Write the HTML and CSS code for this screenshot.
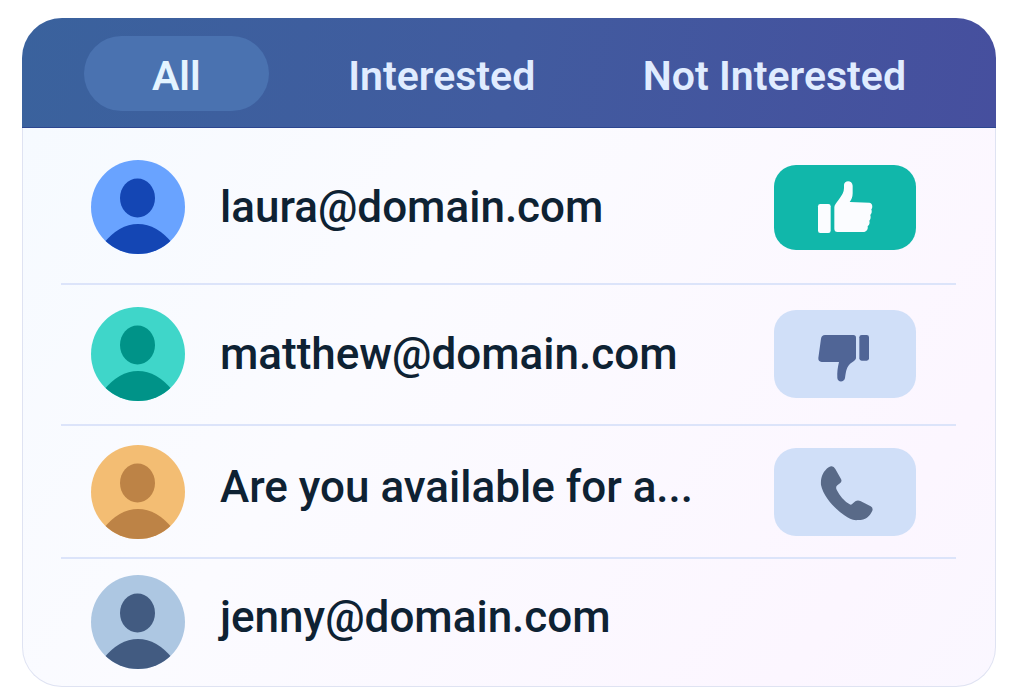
FILE: index.html
```html
<!DOCTYPE html>
<html lang="en">
<head>
<meta charset="utf-8">
<meta name="viewport" content="width=device-width, initial-scale=1">
<title>Replies</title>
<link rel="stylesheet" href="styles.css">
</head>
<body>
<svg class="sprite" aria-hidden="true">
  <symbol id="person" viewBox="0 0 94 94">
    <ellipse cx="46.5" cy="38" rx="17.5" ry="19.5"/>
    <path d="M12 84 Q28 64 47 64 Q66 64 82 84 L82 94 L12 94 Z"/>
  </symbol>
</svg>
<main class="card">
  <nav class="tabs" aria-label="Filter replies">
    <button class="tab tab-active" type="button">All</button>
    <button class="tab" type="button">Interested</button>
    <button class="tab" type="button">Not Interested</button>
  </nav>
  <ul class="list">
    <li class="row row-roomy">
      <svg class="avatar avatar-blue" aria-hidden="true"><use href="#person"/></svg>
      <span class="subject">laura@domain.com</span>
      <button class="action action-yes" type="button" aria-label="Interested">
        <svg class="icon" viewBox="0 0 270 225" aria-hidden="true">
          <rect x="54" y="102" width="38" height="87" rx="7"/>
          <path d="M103 112 C103 104 110 98 116 89 C126 76 132 67 132 54 V45 C132 30 157 29 158 47 V70 C158 82 154 90 149 96 L208 98 C218 99 219 113 214 118 C216 124 216 130 211 135 C213 142 212 148 208 152 C210 160 208 165 203 168 C205 179 199 186 190 186 H113 C106 186 103 182 103 176 Z"/>
        </svg>
      </button>
    </li>
    <li class="row row-medium">
      <svg class="avatar avatar-teal" aria-hidden="true"><use href="#person"/></svg>
      <span class="subject">matthew@domain.com</span>
      <button class="action action-no" type="button" aria-label="Not interested">
        <svg class="icon" viewBox="0 -10 270 225" aria-hidden="true">
          <path d="M75 44 H160 Q168 44 168 52 V112 C168 121 158 122 149 132 C138 144 138 157 135 173 C133 186 113 187 112 173 C111 155 113 141 117 125 H65 Q54 124 55 113 L63 55 Q65 44 75 44 Z"/>
          <rect x="178" y="44" width="29" height="77" rx="7"/>
        </svg>
      </button>
    </li>
    <li class="row row-snug">
      <svg class="avatar avatar-amber" aria-hidden="true"><use href="#person"/></svg>
      <span class="subject subject-raised">Are you available for a...</span>
      <button class="action action-call" type="button" aria-label="Call">
        <svg class="icon" viewBox="0 -4 270 225" aria-hidden="true">
          <path d="M86 33 Q99 25 106 38 L123 68 Q127 76 120 81 L112 87 Q106 92 110 100 Q124 129 149 144 Q154 147 159 141 L166 135 Q173 130 181 134 L212 150 Q220 155 217 163 C209 181 196 191 175 191 C157 193 148 187 133 177 C104 157 70 120 63 86 C61 63 70 44 86 33 Z"/>
        </svg>
      </button>
    </li>
    <li class="row row-tight">
      <svg class="avatar avatar-slate" aria-hidden="true"><use href="#person"/></svg>
      <span class="subject subject-raised">jenny@domain.com</span>
    </li>
  </ul>
</main>
</body>
</html>
```
FILE: styles.css
```css
* {
  box-sizing: border-box;
}

body {
  margin: 0;
  padding: 18px 28px 10px 22px;
  background: #fff;
  color: #0e2233;
  font-family: Roboto, "Liberation Sans", sans-serif;
}

button {
  border: 0;
  font: inherit;
  cursor: pointer;
}

.sprite {
  position: absolute;
  width: 0;
  height: 0;
}

.card {
  overflow: hidden;
  border-radius: 40px;
  background: linear-gradient(125deg, #f5faff 0%, #fbfbff 40%, #fcf6ff 85%, #faf7ff 100%);
  box-shadow: inset 0 0 0 1px #dfe3f2;
}

.tabs {
  display: flex;
  justify-content: space-between;
  padding: 18px 62px 16px;
  background: linear-gradient(100deg, #3a629d 0%, #415b9f 50%, #464f9e 100%);
  border-bottom: 1px solid #2c4690;
}

.tab {
  height: 75px;
  padding: 4px 28px 0;
  border-radius: 38px;
  background: none;
  color: #e0ecff;
  font-size: 41px;
  font-weight: 600;
}

.tab-active {
  padding: 4px 68px 0;
  background: #4a72b0;
  color: #e4f4ff;
}

.list {
  margin: 0;
  padding: 0 40px 0 39px;
  list-style: none;
}

.row {
  display: flex;
  align-items: center;
  gap: 35px;
  padding: 16px 40px 16px 30px;
  border-bottom: 2px solid #dce4fa;
}

.row:last-child {
  padding-bottom: 18px;
  border-bottom: 0;
}

.row-roomy {
  padding-top: 32px;
  padding-bottom: 29px;
}

.row-medium {
  padding-top: 22px;
  padding-bottom: 23px;
}

.row-snug {
  padding-top: 19px;
  padding-bottom: 18px;
}

.avatar {
  flex: none;
  width: 94px;
  height: 94px;
  border-radius: 50%;
}

.avatar-blue {
  background: #69a3ff;
  fill: #1446b4;
}

.avatar-teal {
  background: #3fd6c9;
  fill: #009388;
}

.avatar-amber {
  background: #f3bd73;
  fill: #bd8346;
}

.avatar-slate {
  background: #adc7e2;
  fill: #425b81;
}

.subject {
  flex: 1;
  font-size: 44px;
  font-weight: 500;
  line-height: 52px;
  white-space: nowrap;
}

.subject-raised {
  padding-bottom: 10px;
}

.action {
  display: flex;
  flex: none;
  align-items: center;
  justify-content: center;
  width: 142px;
  height: 88px;
  padding: 0;
  border-radius: 22px;
  background: #d0dff8;
}

.action-yes {
  height: 85px;
  background: #11b7aa;
  fill: #fbfcff;
}

.action-no {
  fill: #506596;
}

.action-call {
  fill: #596a88;
}

.icon {
  width: 90px;
  height: 75px;
}
```
